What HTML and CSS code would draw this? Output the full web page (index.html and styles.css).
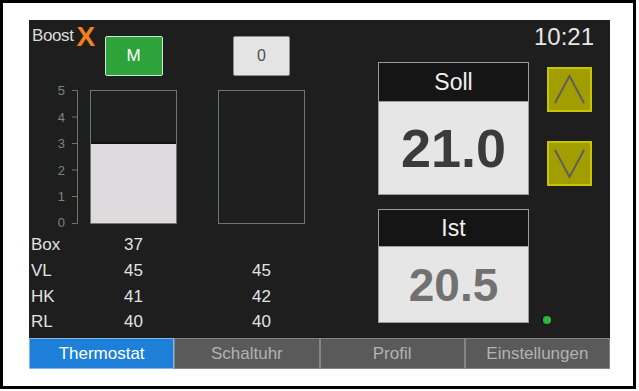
FILE: index.html
```html
<!DOCTYPE html>
<html lang="de">
<head>
  <meta charset="UTF-8">
  <meta name="viewport" content="width=device-width, initial-scale=1.0">
  <title>Boost X Thermostat</title>
  <link rel="stylesheet" href="styles.css">
</head>
<body>
  <div class="frame">
    <div class="screen">
      <div class="main">
        <div class="left">
          <div class="logo"><span class="boost">Boost</span><span class="x">X</span></div>
          <button class="mode mode-m">M</button>
          <button class="mode mode-0">0</button>

          <svg class="axis" width="61" height="156" viewBox="0 0 61 156">
            <g stroke="#6b796b" stroke-width="1" fill="none">
              <path d="M43 14.5H48.5V147.5H43"/>
              <path d="M43 41H48.5M43 67.5H48.5M43 94H48.5M43 120.5H48.5"/>
            </g>
            <g class="axis-labels" text-anchor="end">
              <text x="36" y="19">5</text>
              <text x="36" y="45.5">4</text>
              <text x="36" y="72">3</text>
              <text x="36" y="98.5">2</text>
              <text x="36" y="125">1</text>
              <text x="36" y="151">0</text>
            </g>
          </svg>
          <div class="bar bar-1"><div class="fill" style="height: 60%"></div></div>
          <div class="bar bar-2"></div>

          <div class="label">Box</div>
          <div class="val val-a">37</div>

          <div class="label">VL</div>
          <div class="val val-a">45</div>
          <div class="val val-b">45</div>

          <div class="label">HK</div>
          <div class="val val-a">41</div>
          <div class="val val-b">42</div>

          <div class="label">RL</div>
          <div class="val val-a">40</div>
          <div class="val val-b">40</div>
        </div>

        <div class="right">
          <div class="clock">10:21</div>
          <div class="controls">
            <div class="readouts">
              <div class="readout soll">
                <div class="readout-title">Soll</div>
                <div class="readout-value">21.0</div>
              </div>
              <div class="readout ist">
                <div class="readout-title">Ist</div>
                <div class="readout-value">20.5</div>
              </div>
            </div>
            <div class="arrows">
              <button class="arrow arrow-up">
                <svg width="41" height="41" viewBox="0 0 41 41"><polyline points="6,34 20.5,7 35,34"/></svg>
              </button>
              <button class="arrow arrow-down">
                <svg width="41" height="41" viewBox="0 0 41 41"><polyline points="6,7 20.5,34 35,7"/></svg>
              </button>
              <span class="led"></span>
            </div>
          </div>
        </div>
      </div>

      <div class="tabs">
        <div class="tab active">Thermostat</div>
        <div class="tab">Schaltuhr</div>
        <div class="tab">Profil</div>
        <div class="tab">Einstellungen</div>
      </div>
    </div>
  </div>
</body>
</html>
```

FILE: styles.css
```css
body {
  margin: 0;
  background: #fff;
  font-family: "Liberation Sans", Arial, sans-serif;
}
.frame {
  width: 636px;
  height: 389px;
  box-sizing: border-box;
  border: 3px solid #000;
  padding: 17px 0 0 26px;
}
.screen {
  width: 581px;
  height: 349px;
  background: #1e1e1e;
  display: grid;
  grid-template-rows: 318px 31px;
}
.main {
  display: flex;
}

/* left side: logo, mode buttons, bars, readings */
.left {
  display: grid;
  grid-template-columns: 61px 87px 41px 87px;
  grid-template-rows: 56px 156px 26px 26px 25px 25px;
  color: #e2e2e2;
  font-size: 17px;
}
.logo {
  grid-column: 1;
  display: flex;
  align-items: flex-start;
  padding-left: 3px;
  white-space: nowrap;
}
.boost {
  font-size: 17px;
  line-height: 17px;
  margin-top: 7px;
  color: #dcdcdc;
  letter-spacing: -0.4px;
}
.x {
  font-size: 28px;
  line-height: 28px;
  font-weight: bold;
  color: #f0801c;
  margin: 3px 0 0 3px;
}
.mode {
  align-self: end;
  justify-self: center;
  height: 40px;
  padding: 0;
  border-radius: 2px;
  font-family: inherit;
  font-size: 17px;
}
.mode-m {
  grid-column: 2;
  width: 58px;
  background: #2ea33a;
  border: 1px solid #cfe6cf;
  color: #fff;
}
.mode-0 {
  grid-column: 4;
  width: 57px;
  background: #e4e4e4;
  border: 1px solid #8c8c8c;
  color: #505050;
  font-size: 16px;
}
.axis {
  grid-column: 1;
}
.axis-labels {
  fill: #7a887a;
  font-size: 13px;
  font-family: "Liberation Sans", Arial, sans-serif;
}
.bar {
  margin-top: 14px;
  height: 134px;
  box-sizing: border-box;
  border: 1px solid #6b796b;
  display: flex;
  flex-direction: column;
  justify-content: flex-end;
}
.bar-1 {
  grid-column: 2;
}
.bar-2 {
  grid-column: 4;
}
.fill {
  background: #dedadd;
  border-top: 2px solid #111;
}
.label {
  grid-column: 1;
  padding-left: 2px;
  display: flex;
  align-items: center;
}
.val {
  display: flex;
  align-items: center;
  justify-content: center;
}
.val-a {
  grid-column: 2;
}
.val-b {
  grid-column: 4;
}

/* right side: clock, set/actual values, arrows */
.right {
  margin-left: 73px;
  width: 232px;
  display: flex;
  flex-direction: column;
}
.clock {
  height: 42px;
  line-height: 34px;
  text-align: right;
  padding-right: 16px;
  font-size: 24px;
  color: #e6e6e6;
}
.controls {
  flex: 1;
  display: flex;
  padding-bottom: 15px;
}
.readouts {
  width: 151px;
  display: flex;
  flex-direction: column;
  gap: 14px;
}
.readout {
  box-sizing: border-box;
  border: 1px solid #9c9c9c;
  background: #e6e6e6;
  display: flex;
  flex-direction: column;
}
.soll {
  height: 133px;
}
.ist {
  height: 114px;
}
.readout-title {
  height: 38px;
  background: #151515;
  border-bottom: 1px solid #9c9c9c;
  color: #f0f0f0;
  font-size: 23px;
  display: flex;
  align-items: center;
  justify-content: center;
}
.ist .readout-title {
  height: 36px;
}
.readout-value {
  flex: 1;
  display: flex;
  align-items: center;
  justify-content: center;
  font-weight: bold;
}
.soll .readout-value {
  font-size: 54px;
  color: #3b3b3b;
}
.ist .readout-value {
  font-size: 46px;
  color: #717171;
}
.arrows {
  margin-left: 18px;
  width: 45px;
  display: flex;
  flex-direction: column;
}
.arrow {
  width: 45px;
  height: 45px;
  padding: 0;
  background: #a29d00;
  border: 2px solid #c9c400;
  display: flex;
}
.arrow svg {
  fill: none;
  stroke: #5e5e5e;
  stroke-width: 2;
}
.arrow-up {
  margin-top: 5px;
}
.arrow-down {
  margin-top: 29px;
}
.led {
  margin: auto 0 -1px -4px;
  width: 8px;
  height: 8px;
  border-radius: 50%;
  background: #2db83a;
}

/* bottom tab bar */
.tabs {
  display: grid;
  grid-template-columns: repeat(4, 1fr);
}
.tab {
  background: #5a5a5a;
  color: #b2b2b2;
  border: 1px solid #858585;
  font-size: 17px;
  display: flex;
  align-items: center;
  justify-content: center;
}
.tab.active {
  background: #1d7fd8;
  color: #fff;
  border-color: #84b6e4;
}
```
